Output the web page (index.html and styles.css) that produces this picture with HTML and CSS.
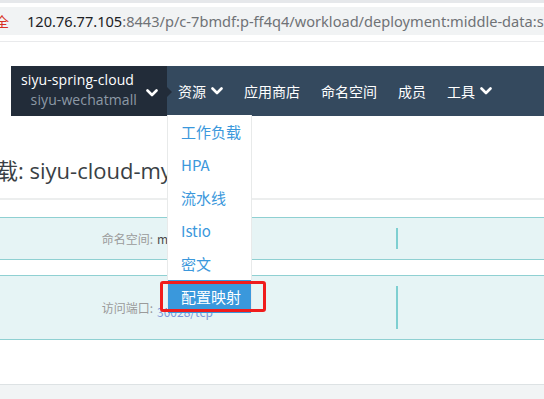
FILE: index.html
```html
<!DOCTYPE html>
<html lang="zh-CN">
<head>
<meta charset="utf-8">
<title>deployment</title>
<link rel="stylesheet" href="styles.css">
</head>
<body>
<div class="chrome">
  <div class="tabstrip"></div>
  <div class="omnibox">
    <span class="insecure">全</span>
    <span class="bar-sep"></span>
    <span class="url"><span class="host">120.76.77.105</span>:8443/p/c-7bmdf:p-ff4q4/workload/deployment:middle-data:siyu-cloud-mysql</span>
  </div>
</div>

<nav class="topnav">
  <div class="project">
    <div class="names">
      <div class="cluster">siyu-spring-cloud</div>
      <div class="proj">siyu-wechatmall</div>
    </div>
    <svg class="chev chev-lg" viewBox="0 0 12 8"><polyline points="1.5,1.5 6,6 10.5,1.5"/></svg>
  </div>
  <ul class="menu">
    <li class="menu-item">资源<svg class="chev" viewBox="0 0 12 8"><polyline points="1.5,1.5 6,6 10.5,1.5"/></svg></li>
    <li class="menu-item">应用商店</li>
    <li class="menu-item">命名空间</li>
    <li class="menu-item">成员</li>
    <li class="menu-item">工具<svg class="chev" viewBox="0 0 12 8"><polyline points="1.5,1.5 6,6 10.5,1.5"/></svg></li>
  </ul>
</nav>

<h1 class="title">载: siyu-cloud-my</h1>

<div class="info">
  <div class="row row-short">
    <div class="field"><span class="label">命名空间:</span><span class="value">middle-data</span></div>
    <div class="divider"></div>
  </div>
  <div class="row row-tall">
    <div class="field"><span class="label">访问端口:</span><span class="value port">30028/tcp</span></div>
    <div class="divider"></div>
  </div>
</div>

<div class="footer-area"></div>

<ul class="dropdown">
  <li class="dd-item">工作负载</li>
  <li class="dd-item">HPA</li>
  <li class="dd-item">流水线</li>
  <li class="dd-item">Istio</li>
  <li class="dd-item">密文</li>
  <li class="dd-item active">配置映射</li>
</ul>
<div class="callout"></div>
</body>
</html>
```

FILE: styles.css
```css
html, body {
  margin: 0;
  padding: 0;
}
body {
  position: relative;
  width: 544px;
  height: 399px;
  overflow: hidden;
  background: #ffffff;
  font-family: "Open Sans", "Noto Sans CJK SC", sans-serif;
  color: #333;
}

/* browser chrome */
.chrome {
  height: 41px;
  border-bottom: 1px solid #e9eaec;
}
.tabstrip {
  height: 3px;
  background: #e6e8eb;
}
.omnibox {
  margin-top: 4px;
  height: 28px;
  background: #f1f3f4;
  display: flex;
  align-items: center;
  white-space: nowrap;
  overflow: hidden;
  font-family: "Noto Sans", "Noto Sans CJK SC", sans-serif;
  font-size: 14.6px;
}
.insecure {
  margin-left: -5px;
  color: #d93025;
  font-family: "Noto Sans CJK SC", sans-serif;
  font-size: 14px;
}
.bar-sep {
  width: 1px;
  height: 16px;
  background: #a9a9a9;
  margin: 0 10px 0 8px;
}
.url {
  color: #6f7276;
}
.host {
  color: #202124;
}

/* top navigation */
.topnav {
  margin: 24px 0 0 11px;
  height: 50px;
  display: flex;
  background: #34495e;
}
.project {
  position: relative;
  width: 156px;
  flex: none;
  box-sizing: border-box;
  background: #222c39;
  display: flex;
  align-items: center;
  padding-left: 10px;
}
.project::after {
  content: "";
  position: absolute;
  right: -5px;
  top: 21px;
  border-left: 5px solid #222c39;
  border-top: 5px solid transparent;
  border-bottom: 5px solid transparent;
}
.names {
  width: 116px;
  flex: none;
  display: flex;
  flex-direction: column;
  font-size: 14px;
  letter-spacing: 0.1px;
  line-height: 20px;
  white-space: nowrap;
}
.cluster {
  color: #ffffff;
  margin-top: -3px;
}
.proj {
  color: #8d99a6;
  text-align: right;
}
.chev {
  width: 12px;
  height: 8px;
  fill: none;
  stroke: #ffffff;
  stroke-width: 2.6;
  stroke-linecap: round;
  stroke-linejoin: round;
  margin-left: 5px;
}
.chev-lg {
  margin-left: 9px;
  margin-top: 3px;
}
.menu {
  list-style: none;
  margin: 0;
  padding: 0 0 0 11px;
  display: flex;
  align-items: center;
  gap: 21px;
  font-family: "Noto Sans CJK SC", sans-serif;
  font-size: 14px;
  color: #ffffff;
}
.menu-item {
  display: flex;
  align-items: center;
  white-space: nowrap;
}

/* page title */
.title {
  margin: 0;
  height: 84px;
  box-sizing: border-box;
  padding-top: 39px;
  text-indent: -4px;
  font-size: 22px;
  font-weight: 400;
  line-height: 30px;
  color: #3a3f45;
  white-space: nowrap;
  font-family: "Open Sans", "Noto Sans CJK SC", sans-serif;
  border-bottom: 2px solid #eceeee;
}

/* info rows */
.info {
  margin-top: 17px;
  display: flex;
  flex-direction: column;
  gap: 15px;
}
.row {
  display: flex;
  align-items: center;
  background: #e6f4f5;
  border-top: 1px solid #8fd0d2;
  border-bottom: 1px solid #8fd0d2;
}
.row-short { height: 41px; }
.row-tall { height: 63px; }
.field {
  width: 396px;
  display: flex;
  align-items: center;
  font-family: "Noto Sans CJK SC", sans-serif;
  font-size: 12px;
  white-space: nowrap;
}
.label {
  width: 153px;
  text-align: right;
  color: #9a9a9a;
}
.value {
  margin-left: 4px;
  color: #4a4a4a;
}
.port {
  color: #7d98d8;
  margin-top: 7px;
}
.divider {
  width: 2px;
  background: #7ecfd1;
}
.row-short .divider { height: 21px; }
.row-tall .divider { height: 43px; }

.footer-area {
  margin-top: 44px;
  height: 20px;
  border-top: 1px solid #dde2e4;
  background: #f1f4f5;
}

/* dropdown overlay */
.dropdown {
  position: absolute;
  left: 167px;
  top: 115px;
  width: 85px;
  box-sizing: border-box;
  margin: 0;
  padding: 0;
  list-style: none;
  background: #ffffff;
  border-left: 1px solid #e8eaea;
  border-right: 1px solid #e8eaea;
  font-family: "Noto Sans CJK SC", sans-serif;
  font-size: 15px;
}
.dd-item {
  height: 33px;
  line-height: 33px;
  padding-left: 13px;
  color: #3b98dc;
  white-space: nowrap;
}
.dd-item.active {
  background: #3a98dc;
  color: #ffffff;
}
.callout {
  position: absolute;
  left: 160px;
  top: 281px;
  width: 106px;
  height: 31px;
  box-sizing: border-box;
  border: 3px solid #f01c1c;
  border-radius: 3px;
}
```
